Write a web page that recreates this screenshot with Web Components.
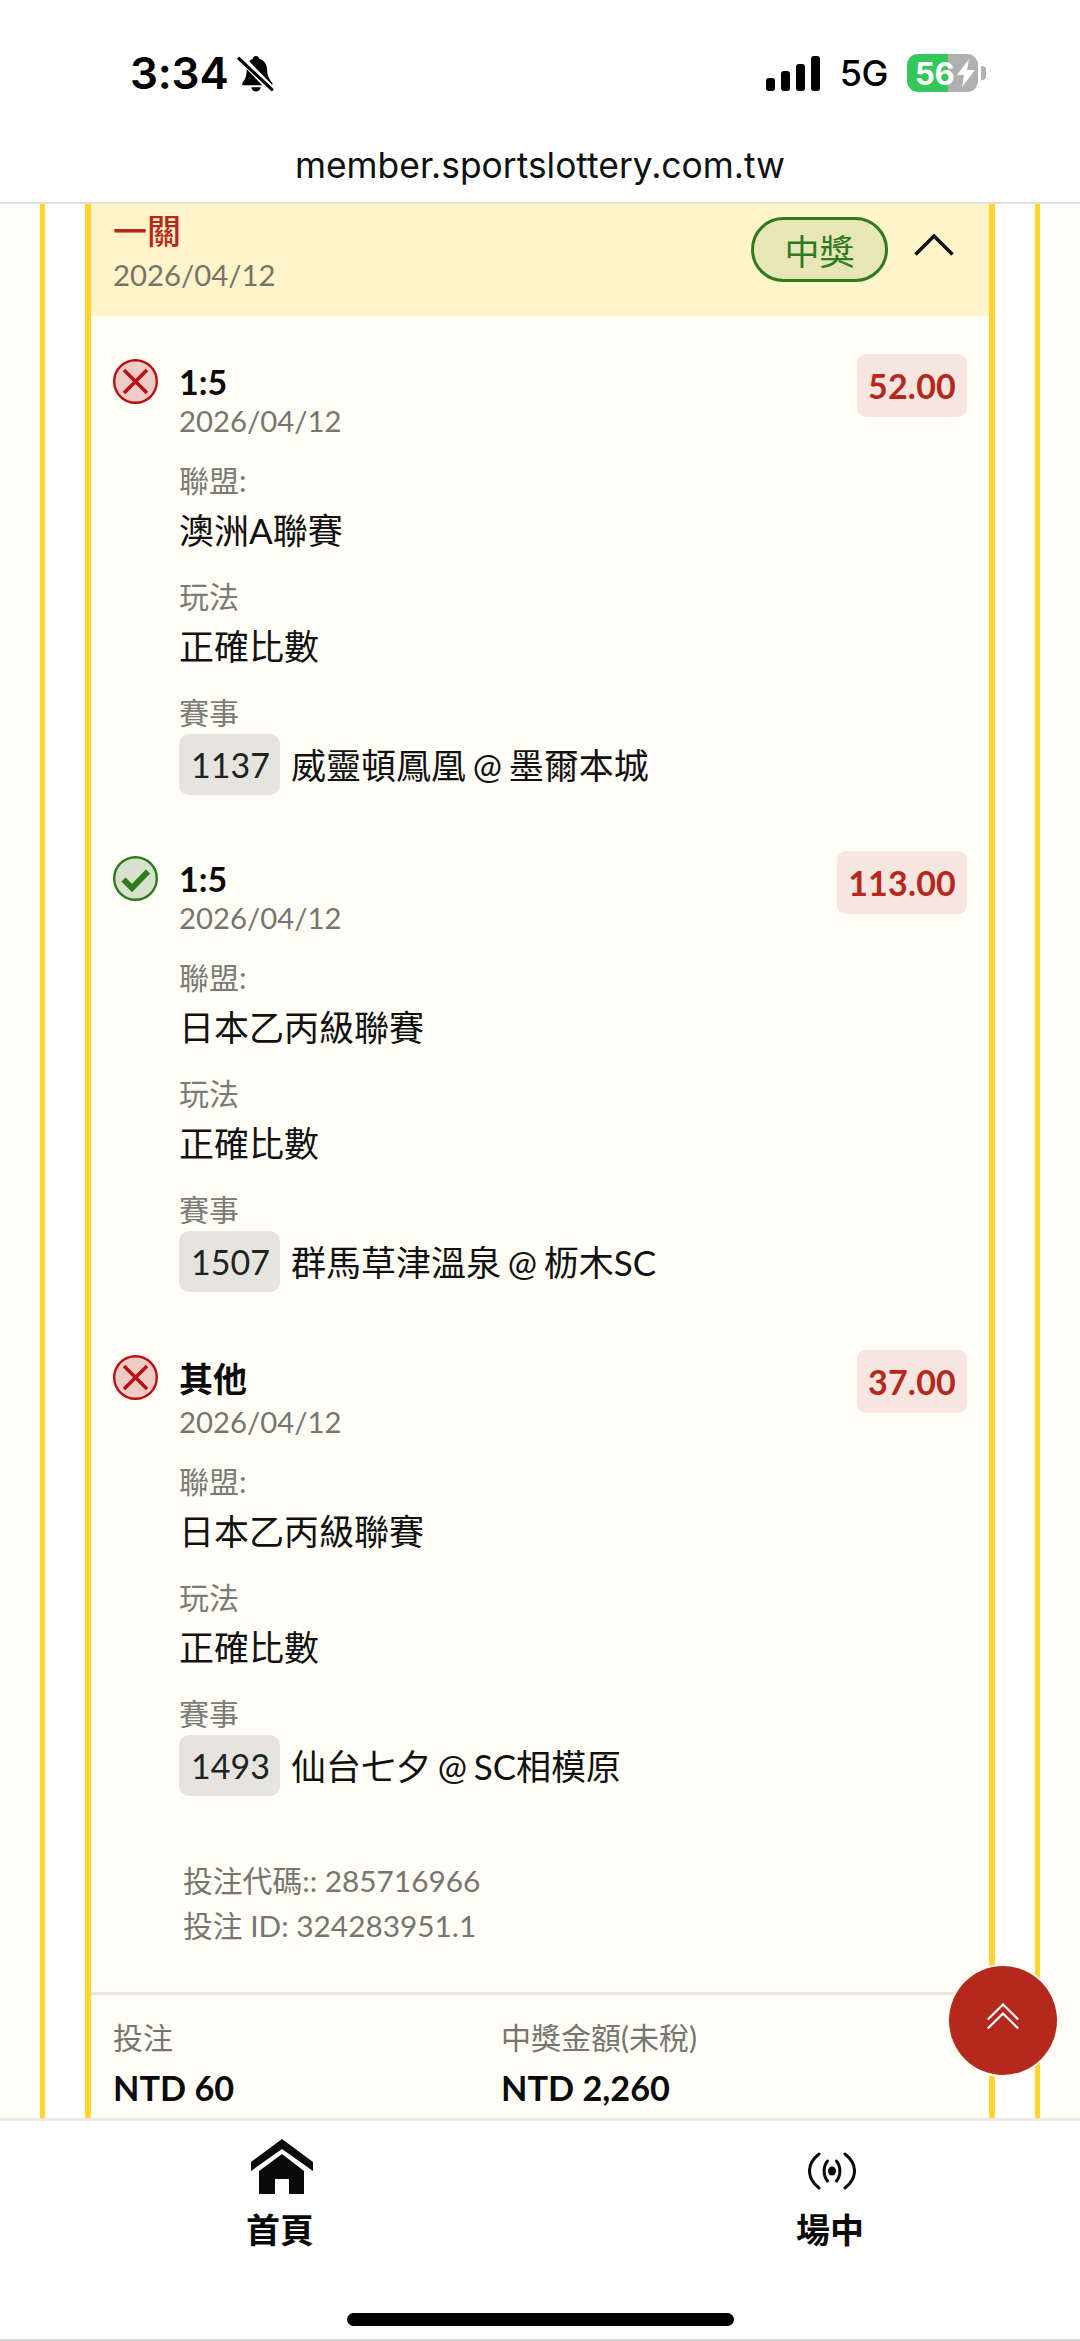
<!doctype html>
<html lang="zh-Hant">
<head>
<meta charset="utf-8">
<title>member.sportslottery.com.tw</title>
<style>
html,body{margin:0;padding:0;background:#fff}
body{width:1080px;height:2341px;overflow:hidden;font-family:Lato,"Noto Sans CJK TC",sans-serif}
</style>
</head>
<body>
<app-shell>
  <phone-header slot="top"></phone-header>
  <ticket-panel>
    <ticket-head slot="head" title="一關" date="2026/04/12"></ticket-head>
    <bet-leg style="height:497px" result="lose" name="1:5" date="2026/04/12" odds="52.00" league="澳洲A聯賽" play="正確比數" code="1137" match="威靈頓鳳凰 @ 墨爾本城"></bet-leg>
    <bet-leg style="height:499px" result="win" name="1:5" date="2026/04/12" odds="113.00" league="日本乙丙級聯賽" play="正確比數" code="1507" match="群馬草津溫泉 @ 枥木SC"></bet-leg>
    <bet-leg tall result="lose" name="其他" date="2026/04/12" odds="37.00" league="日本乙丙級聯賽" play="正確比數" code="1493" match="仙台七夕 @ SC相模原"></bet-leg>
    <ticket-foot slot="foot"></ticket-foot>
  </ticket-panel>
  <scroll-top slot="float"></scroll-top>
  <bottom-nav slot="bottom"></bottom-nav>
</app-shell>
<script>
function define(name, html, init){
  customElements.define(name, class extends HTMLElement{
    constructor(){super();const r=this.attachShadow({mode:'open'});r.innerHTML=html;}
    connectedCallback(){ if(init) init(this,this.shadowRoot); }
  });
}
const FONT='Lato,"Noto Sans CJK TC",sans-serif';

define('app-shell',`<style>
:host{display:flex;flex-direction:column;width:1080px;height:2341px;position:relative;overflow:hidden;background:#fff}
.main{flex:1;min-height:0;overflow:hidden;background:#fffdf5}
</style>
<slot name="top"></slot>
<div class="main"><slot></slot></div>
<slot name="bottom"></slot>
<slot name="float"></slot>`);

define('phone-header',`<style>
:host{display:block;height:204px;box-sizing:border-box;background:#fff;border-bottom:2px solid #e2e1dd;font-family:Inter,"Liberation Sans",sans-serif;color:#000}
.status{display:flex;justify-content:space-between;align-items:center;height:72px;padding:37px 94px 0 130px;box-sizing:content-box}
.left,.right{display:flex;align-items:center}
.time{font-size:44px;font-weight:600;line-height:44px;letter-spacing:-.2px}
.left svg{margin-left:8px}
.g5{font-size:36px;font-weight:500;line-height:44px;margin:0 19px 0 20px;letter-spacing:-.5px}
.batt{position:relative;width:71px;height:38px;border-radius:11px;overflow:hidden;background:linear-gradient(90deg,#36c75c 0 41px,#b0b0b0 41px);display:flex;align-items:center;color:#fff;font-size:31px;font-weight:700;padding-left:8px;box-sizing:border-box;letter-spacing:-.3px}
.batt svg{margin-left:2px}
.tip{width:5px;height:14px;background:#b0b0b0;border-radius:0 4px 4px 0;margin-left:3px}
.url{text-align:center;font-size:35.4px;line-height:50px;margin-top:32px;color:#111;letter-spacing:0}
</style>
<div class="status">
  <div class="left"><span class="time">3:34</span>
    <svg width="38" height="38" viewBox="0 0 36 36"><path d="M18 2c1.600 0 2.700 1 3 2.500 5 1.300 7.300 5.300 7.500 10.500.2 5 1.500 8.500 5 12.500v2H5v-2c3-3.500 4.200-7 4.200-12C9.500 9.800 11.500 5.800 15 4.500 15.300 3 16.400 2 18 2zM13.500 31.500h9c-.3 2.500-2.200 4-4.500 4s-4.200-1.500-4.500-4z" fill="#000"/><path d="M2 2l32 33" stroke="#fff" stroke-width="7"/><path d="M1 3.500l33 31" stroke="#000" stroke-width="3"/></svg>
  </div>
  <div class="right">
    <svg width="54" height="35" viewBox="0 0 54 35"><rect x="0" y="22" width="9" height="13" rx="3"/><rect x="15" y="15" width="9" height="20" rx="3"/><rect x="30" y="8" width="9" height="27" rx="3"/><rect x="45" y="0" width="9" height="35" rx="3"/></svg>
    <span class="g5">5G</span>
    <div class="batt">56<svg width="20" height="30" viewBox="0 0 20 30"><path d="M13 1L1 17h7l-2 12L19 12h-8z" fill="#fff"/></svg></div><div class="tip"></div>
  </div>
</div>
<div class="url">member.sportslottery.com.tw</div>`);

define('ticket-panel',`<style>
:host{display:block;margin:0 40px;background:#fff;border-left:5px solid #ffd52e;border-right:5px solid #ffd52e;padding:0 40px;height:1920px}
.card{background:#fffdf5;border-left:6px solid #ffd52e;border-right:6px solid #ffd52e;height:100%;margin-right:0}
.legs{display:flex;flex-direction:column;padding-top:43px}
</style>
<div class="card">
  <slot name="head"></slot>
  <div class="legs"><slot></slot></div>
  <slot name="foot"></slot>
</div>`);

define('ticket-head',`<style>
:host{display:flex;justify-content:space-between;align-items:flex-start;height:112px;background:#fef3c9;padding:0 0 0 22px;font-family:${FONT}}
.t{font-size:34px;line-height:44px;color:#b5281c;font-weight:500;margin-top:5px}
.d{font-size:29.300px;line-height:40px;color:#77736a;margin-top:2px}
.r{display:flex;align-items:center;margin:13px 35px 0 0}
.pill{width:137px;height:65px;box-sizing:border-box;border:3px solid #2f7a1f;border-radius:33px;background:#e8e6b7;color:#2f7a1f;font-size:35px;display:flex;align-items:center;justify-content:center}
.r svg{margin:-9px 0 0 26px}
</style>
<div><div class="t"></div><div class="d"></div></div>
<div class="r"><div class="pill">中獎</div>
<svg width="40" height="22" viewBox="0 0 40 22"><path d="M1.500 20.500L20 2l18.500 18.500" fill="none" stroke="#111" stroke-width="3.500"/></svg></div>`,
(el,r)=>{r.querySelector('.t').textContent=el.getAttribute('title');r.querySelector('.d').textContent=el.getAttribute('date');});

const ICONS={
 lose:`<svg width="45" height="45" viewBox="0 0 45 45"><circle cx="22.500" cy="22.500" r="21.300" fill="#efcbc6" stroke="#b80f14" stroke-width="2.400"/><path d="M11 11l23 23M34 11L11 34" stroke="#b80f14" stroke-width="3.600" fill="none"/></svg>`,
 win:`<svg width="45" height="45" viewBox="0 0 45 45"><circle cx="22.500" cy="22.500" r="21.300" fill="#d7e2cc" stroke="#2f7a1f" stroke-width="2.400"/><path d="M10.500 23.500l8.500 8.500L35 15.500" stroke="#2f7a1f" stroke-width="6" fill="none"/></svg>`
};
define('info-field',`<style>
:host{display:block;font-family:${FONT}}
.l{font-size:30px;line-height:40px;color:#7b7b78}
.v{font-size:35px;line-height:50px;color:#111;margin-top:5px}
</style><div class="l"></div><div class="v"><slot></slot></div>`,
(el,r)=>{r.querySelector('.l').textContent=el.getAttribute('label');});

define('bet-leg',`<style>
:host{display:block;height:498px;box-sizing:border-box;padding-left:22px;font-family:${FONT}}
.top{display:flex;align-items:flex-start}
.ic{width:45px;height:45px;flex:none;margin-right:21px}
.main{flex:1}
.name{font-size:34px;font-weight:700;line-height:44px;color:#0b0b0b;margin-top:1px}
.date{font-size:29.300px;line-height:36px;color:#777570;margin-top:-1px}
:host([tall]) .name{line-height:51px;margin-top:-2px}
:host([tall]) .date{margin-top:0}
.odds{height:63px;box-sizing:border-box;padding:0 11px;margin:-5px 22px 0 0;background:#f7e6df;border-radius:9px;color:#b5281c;font-size:34px;font-weight:700;display:flex;align-items:center;letter-spacing:.2px}
.fields{margin:21px 0 0 66px;display:flex;flex-direction:column;gap:21px}
.row{display:flex;align-items:center;margin-top:-3px}
.tag{height:61px;padding:0 10px 0 12px;background:#e6e4de;border-radius:10px;font-size:34px;display:flex;align-items:center;margin-right:11px;color:#222}
.match{font-size:35px;color:#111;word-spacing:-2.200px}
</style>
<div class="top">
  <div class="ic"></div>
  <div class="main"><div class="name"></div><div class="date"></div></div>
  <div class="odds"></div>
</div>
<div class="fields">
  <info-field label="聯盟:"><span class="league"></span></info-field>
  <info-field label="玩法"><span class="play"></span></info-field>
  <info-field label="賽事"><div class="row"><span class="tag"></span><span class="match"></span></div></info-field>
</div>`,
(el,r)=>{
  r.querySelector('.ic').innerHTML=ICONS[el.getAttribute('result')];
  for(const [s,a] of [['.name','name'],['.date','date'],['.odds','odds'],['.league','league'],['.play','play'],['.tag','code'],['.match','match']])
    r.querySelector(s).textContent=el.getAttribute(a);
});

define('ticket-foot',`<style>
:host{display:block;font-family:${FONT}}
.ids{padding:0 0 0 92px;margin-top:5px;font-size:29.800px;line-height:45px;color:#777570;height:134px}
.amt{border-top:3px solid #e8e6e0;display:grid;grid-template-columns:388px 1fr;padding:20px 0 0 22px}
.l{font-size:30px;line-height:44px;color:#777570}
.v{font-size:34.300px;font-weight:700;line-height:44px;color:#0b0b0b;margin-top:7px}
</style>
<div class="ids"><div>投注代碼:: 285716966</div><div>投注 ID: 324283951.1</div></div>
<div class="amt">
  <div><div class="l">投注</div><div class="v">NTD 60</div></div>
  <div><div class="l">中獎金額(未稅)</div><div class="v">NTD 2,260</div></div>
</div>`);

define('scroll-top',`<style>
:host{position:absolute;left:949px;top:1966px;width:108px;height:109px;border-radius:50%;background:#b5281c;display:flex;align-items:center;justify-content:center;box-shadow:0 0 0 2px #fffdf5}
svg{margin-top:-9px}
</style>
<svg width="32" height="27" viewBox="0 0 32 27"><path d="M.800 16.500L16 1.500 31.200 16.500M.800 25.500L16 10.500 31.200 25.500" fill="none" stroke="#fff" stroke-width="2.200"/></svg>`);

define('bottom-nav',`<style>
:host{display:block;height:223px;box-sizing:border-box;background:#fff;border-top:3px solid #e8e8e6;border-bottom:2px solid #d6d6d6;font-family:${FONT};position:relative}
.tabs{display:grid;padding:0 216px 0 246px;grid-template-columns:68px 68px;justify-content:space-between}
.tab{display:flex;flex-direction:column;align-items:center;width:68px}
.ico{height:73px;display:flex;align-items:flex-end;justify-content:center}
.lab{font-size:34px;font-weight:700;line-height:44px;margin-top:14px;color:#0b0b0b;white-space:nowrap}
.home{width:387px;height:13px;border-radius:7px;background:#000;margin:61px auto 0}
.a svg{margin-left:3px}
.b svg{margin-left:3px}
.b .ico{padding-bottom:4px;height:69px}
</style>
<div class="tabs">
  <div class="tab a"><div class="ico"><svg width="62" height="55" viewBox="0 0 62 55"><path d="M31 0L62 23v9L31 10 0 32v-9z" fill="#0a0a0a"/><path d="M31 15l22 17v23H38V40H24v15H8V32z" fill="#0a0a0a"/></svg></div><div class="lab">首頁</div></div>
  <div class="tab b"><div class="ico"><svg width="48" height="38" viewBox="0 0 48 38"><ellipse cx="24" cy="19" rx="4" ry="4.500" fill="#0a0a0a"/><g fill="none" stroke="#0a0a0a" stroke-width="3" stroke-linecap="round"><path d="M19.500 9C15 14.500 15 23.500 19.500 29M28.500 9C33 14.500 33 23.500 28.500 29"/><path d="M11 2C-1.700 12-1.700 26 11 36M37 2C49.700 12 49.700 26 37 36"/></g></svg></div><div class="lab">場中</div></div>
</div>
<div class="home"></div>`);
</script>
</body>
</html>
